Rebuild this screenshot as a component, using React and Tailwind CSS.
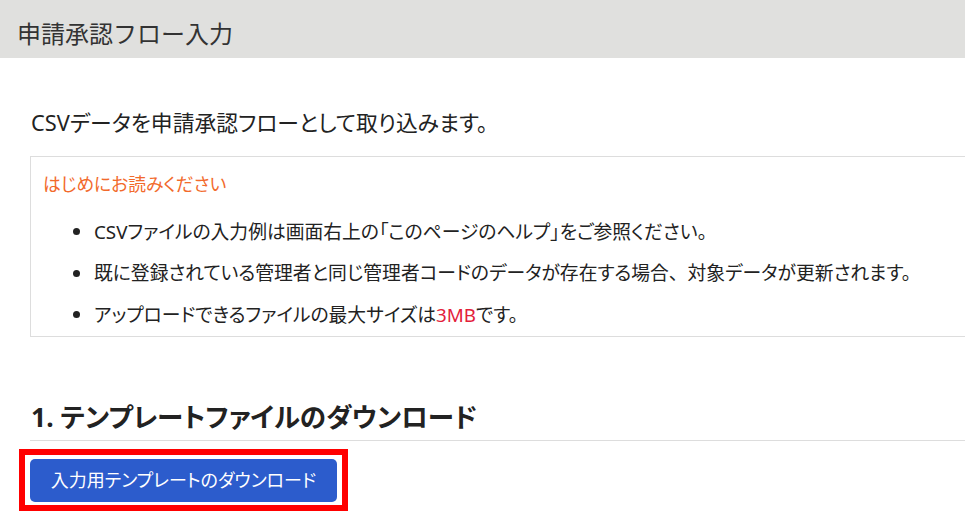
import React from "react"

const font = { fontFamily: '"Noto Sans", "Noto Sans CJK JP", sans-serif' }

const notes = [
  <>CSVファイルの入力例は画面右上の「このページのヘルプ」をご参照ください。</>,
  <>
    既に登録されている管理者と同じ管理者コードのデータが存在する場合
    <span className="[font-feature-settings:normal]">、</span>
    対象データが更新されます。
  </>,
  <>
    アップロードできるファイルの最大サイズは<span className="text-[#e3203a]">3MB</span>です。
  </>,
]

export default function App() {
  return (
    <div className="w-[965px] h-[531px] overflow-hidden bg-white text-[#222]" style={font}>
      {/* Page title bar */}
      <header className="h-[58px] bg-[#e0e0de] pl-[17px] pt-[20px]">
        <h1 className="text-[24px] leading-[28px] font-normal text-[#333]">申請承認フロー入力</h1>
      </header>

      <main className="w-[1000px] [font-feature-settings:'palt']">
        <p className="mt-[50px] mb-[18px] pl-[31px] text-[21.8px] leading-[30px]">
          CSVデータを申請承認フローとして取り込みます。
        </p>

        {/* Notice box */}
        <section className="ml-[30px] border border-[#dddddd] pl-[12px] pt-[15px]">
          <p className="text-[17.8px] leading-[24px] text-[#f26a2c]">はじめにお読みください</p>
          <ul className="mt-[15px]">
            {notes.map((text, i) => (
              <li key={i} className="flex items-center h-[41.5px] text-[18.8px]">
                <span className="ml-[30px] w-[7px] h-[7px] rounded-full bg-[#222]" />
                <span className="ml-[14px]">{text}</span>
              </li>
            ))}
          </ul>
        </section>

        {/* Step 1 */}
        <h2 className="mt-[64px] ml-[30px] pl-[1px] pb-[7px] border-b border-[#dddddd] text-[26.5px] leading-[32px] font-bold">
          1. テンプレートファイルのダウンロード
        </h2>
        <div className="ml-[19px] mt-[8px] inline-block border-[6px] border-[#ff0000] pl-[5px] pr-[5px] pt-[4px] pb-[3px]">
          <button
            type="button"
            className="w-[307px] h-[43px] rounded-[5px] bg-[#2c5ccc] text-white text-[18px] flex items-center justify-center"
          >
            入力用テンプレートのダウンロード
          </button>
        </div>
      </main>
    </div>
  )
}
